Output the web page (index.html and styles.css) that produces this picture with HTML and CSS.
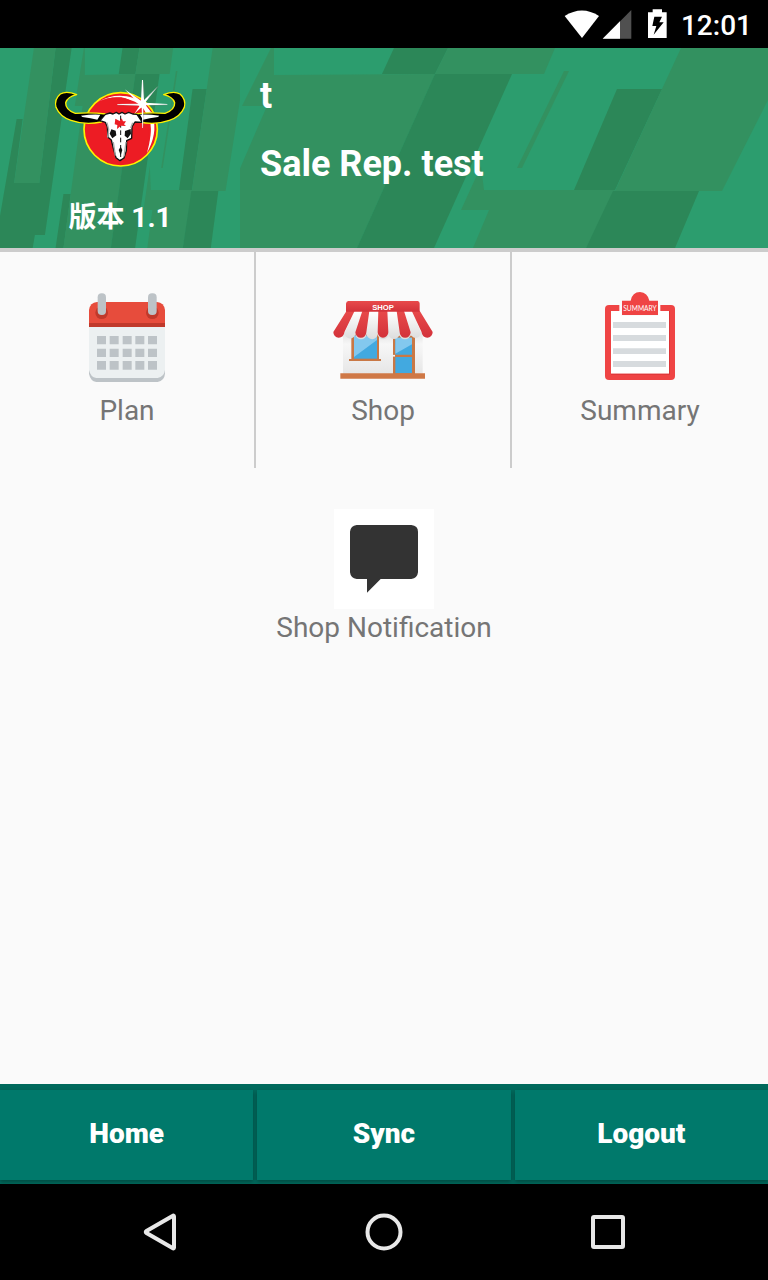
FILE: index.html
```html
<!DOCTYPE html>
<html lang="zh">
<head>
<meta charset="utf-8">
<meta name="viewport" content="width=device-width, initial-scale=1">
<title>Sale Rep.</title>
<link rel="stylesheet" href="styles.css">
</head>
<body>
<div class="screen">
  <div class="status">
    <svg class="status-icons" viewBox="0 0 324 96" aria-hidden="true">
      <path fill="#fff" d="M2 18Q54-15 105 18L54 84Z"/>
      <path fill="#505050" d="M202 0V86H116Z"/>
      <path fill="#fff" d="M168 34V86H116Z"/>
      <path fill="#fff" d="M266-2H294V7H308V84H252V7H266Z"/>
      <path fill="#000" d="M271 20H294L286 37H299L269 74L277 48H265Z"/>
    </svg>
    <time class="clock">12:01</time>
  </div>

  <header class="header">
    <div class="brand">
      <svg class="backdrop" viewBox="0 0 764 200" preserveAspectRatio="none" aria-hidden="true">
        <g id="pattern">
          <rect width="764" height="200" fill="#2c9d6e"/>
          <path fill="#2c8758" d="M177 0H228L143 187H111L104 200H0V168L53 71H72L45 135H125Z"/>
          <path fill="#339160" d="M108 0H177L125 135H45Z"/>
          <path fill="#2c8758" d="M202 146H225L202 200H177Z"/>
          <g transform="translate(236)">
            <path fill="#339160" d="M31 0H34V27L195 26L117 200H-34L-11 146L27 58H2Z"/>
            <path fill="#2c8758" d="M154 0H208L195 26H142Z"/>
            <path fill="#339160" d="M208 0H315L304 26H195Z"/>
            <path fill="#2c8758" d="M195 26H272L194 200H117Z"/>
            <path fill="#339160" d="M241 118L244 142H375L346 200H233L249 162H221Z"/>
            <path fill="#2c8758" d="M377 41H422L375 142H334Z"/>
            <path fill="#339160" d="M441 0H528V52L482 143H375L422 41Z"/>
            <path fill="#2c8758" d="M373 143H459L435 200H346Z"/>
            <path fill="#339160" d="M324 23H329L282 120H277Z"/>
          </g>
        </g>
      </svg>
      <svg class="logo" viewBox="0 0 450 330" role="img" aria-label="Bull skull logo">
        <circle cx="227" cy="178" r="110" fill="#ed1c24" stroke="#fff200" stroke-width="5"/>
        <path d="M163 94Q200 72 245 79Q300 88 324 142Q338 190 306 249Q322 190 315 158Q300 108 270 95Q215 70 163 94Z" fill="#fff"/>
        <path d="M158 98Q205 76 259 96Q300 120 316 158Q321 205 300 250Q322 185 300 140Q277 92 229 82Q185 80 158 98Z" fill="#ed1c24"/>
        <g id="horn">
          <path d="M95 74Q64 61 46 72Q27 88 33 112Q45 141 78 151Q119 166 169 156L182 132Q139 126 91 130Q61 119 62 98Q68 80 95 74Z" fill="#000" stroke="#fff200" stroke-width="4" stroke-linejoin="round"/>
          <path d="M108 137Q142 132 166 134L157 149Q139 144 112 141Z" fill="#fff"/>
        </g>
        <use href="#horn" transform="translate(451) scale(-1 1)"/>
        <path d="M165 152L181 133L195 129L204 132L214 127L222 132L231 127L240 132L251 127L263 132L276 133L292 157L270 156L261 170L260 205L245 212L244 242L237 264L225 272L213 263L205 235L199 210L189 202L187 170L181 157Z" fill="#fff" stroke="#111" stroke-width="4" stroke-linejoin="round"/>
        <path d="M199 178L212 182L214 196L202 205L194 191ZM240 183L257 177L258 191L248 205L239 197Z" fill="#111"/>
        <path d="M186 158L191 178L188 203M263 158L257 174M205 216L211 257M243 216L237 259" fill="none" stroke="#aaa" stroke-width="4"/>
        <path d="M227 137V270" stroke="#111" stroke-width="3" stroke-dasharray="14 8"/>
        <path d="M227 230L232 240L227 256L221 240Z" fill="#111"/>
        <path d="M211 146L224 153L230 145L234 154L243 154L237 163L243 168L228 167L216 177L217 165L209 163Z" fill="#ed1c24"/>
        <path d="M291 30H294L297 90L339 49L300 98L367 102V104L302 106L321 130L295 112L294 174H292L290 112L268 131L284 107L217 104V102L282 101L239 58L288 92Z" fill="#fff"/>
        <path d="M295 38L298 84M310 82L341 48M312 107L367 105M217 106L278 106M296 127V172" stroke="#777" stroke-width="1"/>
        <circle cx="293" cy="102" r="11" fill="#fff"/>
      </svg>
      <div class="version">版本 1.1</div>
    </div>
    <div class="profile">
      <svg class="backdrop" viewBox="236 0 528 200" preserveAspectRatio="none" aria-hidden="true"><use href="#pattern"/></svg>
      <p class="profile-line">t</p>
      <p class="profile-line">Sale Rep. test</p>
    </div>
  </header>

  <main class="menu">
    <button class="tile" type="button">
      <svg class="tile-icon" viewBox="21 36 300 300" aria-hidden="true">
        <path fill="#bdc3c7" d="M57 270H285V281Q283 302 263 306H79Q61 303 57 282Z"/>
        <path fill="#ecf0f1" d="M57 138H285V270Q283 290 263 294H79Q61 291 57 270Z"/>
        <path fill="#e74c3c" d="M81 66H261Q282 68 285 90V130H57V90Q60 68 81 66Z"/>
        <path fill="#c0392b" d="M57 129H285V141H57Z"/>
        <circle cx="95" cy="98" r="19" fill="#c0392b"/><circle cx="247" cy="98" r="19" fill="#c0392b"/>
        <rect x="83" y="40" width="25" height="65" rx="12" fill="#bdc3c7"/><rect x="234" y="40" width="26" height="65" rx="12" fill="#bdc3c7"/>
        <path fill="#bdc3c7" d="M81 168h27v25h-27zM119 168h27v25h-27zM158 168h27v25h-27zM196 168h27v25h-27zM234 168h27v25h-27zM81 206h27v25h-27zM119 206h27v25h-27zM158 206h27v25h-27zM196 206h27v25h-27zM234 206h27v25h-27zM81 243h27v26h-27zM119 243h27v26h-27zM158 243h27v26h-27zM196 243h27v26h-27zM234 243h27v26h-27z"/>
      </svg>
      <span class="tile-label">Plan</span>
    </button>
    <button class="tile" type="button">
      <svg class="tile-icon" viewBox="39 21 300 300" aria-hidden="true">
        <defs>
          <linearGradient id="red" x2="0" y2="1"><stop stop-color="#e84a4b"/><stop offset="1" stop-color="#d3323a"/></linearGradient>
          <linearGradient id="white" x2="0" y2="1"><stop stop-color="#fff"/><stop offset="1" stop-color="#dcdcdc"/></linearGradient>
          <linearGradient id="wall" x2="0" y2="1"><stop stop-color="#e0e0e0"/><stop offset=".3" stop-color="#f7f7f7"/><stop offset="1" stop-color="#e6e6e6"/></linearGradient>
        </defs>
        <path fill="url(#wall)" d="M69 140H308V266H69Z"/>
        <path fill="#c97845" d="M94 148H177V222H183V228H87V222H94Z"/>
        <path fill="#42a9e0" d="M102 152H171V221H102Z"/>
        <path fill="#83c8ee" d="M102 152H171V165L102 216Z"/>
        <path fill="#c97845" d="M219 152H285V267H219Z"/>
        <path fill="#42a9e0" d="M226 158H276V209H226ZM226 216H276V265H226Z"/>
        <path fill="#83c8ee" d="M226 158H276V178L226 206Z"/>
        <circle cx="222" cy="212" r="3" fill="#fff"/>
        <path fill="#cf7846" d="M61 265H315V281H61Z"/>
        <path fill="url(#white)" d="M103 79H277L302 140A15 15 0 0 1 272 146A15 15 0 0 1 238 146A16 16 0 0 1 206 146A16 16 0 0 1 173 146A16 16 0 0 1 140 146A16 16 0 0 1 106 146A15 15 0 0 1 74 143Z"/>
        <path fill="url(#red)" d="M80 77H104L73 142A16 16 0 0 1 40 141ZM127 78H148L139 142A16 16 0 0 1 106 142ZM175 78H202L205 142A16 16 0 0 1 173 142ZM230 78H252L272 142A16 16 0 0 1 239 142ZM275 77H299L338 141A16 16 0 0 1 305 142Z"/>
        <path fill="url(#red)" d="M85 48H293Q299 49 299 56V80H78V56Q79 49 85 48Z"/>
        <text x="189" y="74" class="sign sign-shop">SHOP</text>
      </svg>
      <span class="tile-label">Shop</span>
    </button>
    <button class="tile" type="button">
      <svg class="tile-icon" viewBox="0 36 300 300" aria-hidden="true">
        <rect x="45" y="75" width="210" height="225" rx="12" fill="#ef4444"/>
        <path fill="#fff" d="M63 93H237V281H63Z"/>
        <path fill="#dc3437" d="M237 93H240V284H63V281H237Z"/>
        <path fill="#d7dbde" d="M69 126H228V144H69ZM69 165H228V183H69ZM69 205H228V222H69ZM69 243H228V261H69Z"/>
        <path fill="#fafafa" d="M88 72H211V93H205V108H94V93H88Z"/>
        <path fill="#ef4444" d="M96 62H122Q127 36 150 36Q173 38 178 62H204V105H96Z"/>
        <text x="150" y="92" class="sign sign-summary">SUMMARY</text>
      </svg>
      <span class="tile-label">Summary</span>
    </button>
    <button class="tile tile-wide" type="button">
      <svg class="tile-icon" viewBox="222 27 300 300" aria-hidden="true">
        <path fill="#fff" d="M222 27H522V327H222Z"/>
        <path fill="#333" d="M290 75H454Q474 77 474 95V217Q472 235 454 237H362L321 278V237H290Q272 235 270 217V95Q272 77 290 75Z"/>
      </svg>
      <span class="tile-label">Shop Notification</span>
    </button>
  </main>

  <div class="actions">
    <button class="action" type="button">Home</button>
    <button class="action" type="button">Sync</button>
    <button class="action" type="button">Logout</button>
  </div>

  <nav class="system-nav">
    <button class="key" type="button" aria-label="Back"><svg class="key-icon" viewBox="0 0 48 48"><path d="M38 8.500V39.500Q38 41 36.500 40L10.500 25Q9 24 10.500 23L36.500 8Q38 7 38 8.500Z"/></svg></button>
    <button class="key" type="button" aria-label="Home screen"><svg class="key-icon" viewBox="0 0 48 48"><circle cx="24" cy="24" r="16.500"/></svg></button>
    <button class="key" type="button" aria-label="Recent apps"><svg class="key-icon" viewBox="0 0 48 48"><rect x="9" y="9" width="30" height="30" rx="1"/></svg></button>
  </nav>
</div>
</body>
</html>
```

FILE: styles.css
```css
* { box-sizing: border-box; }
body {
  margin: 0;
  background: #fafafa;
  font-family: Roboto, "Noto Sans CJK SC", sans-serif;
}
button {
  margin: 0;
  padding: 0;
  border: 0;
  background: none;
  font: inherit;
  color: inherit;
}
svg { display: block; }
.screen {
  min-height: 100vh;
  display: flex;
  flex-direction: column;
}
.status {
  display: flex;
  justify-content: flex-end;
  align-items: center;
  gap: 9px;
  height: 48px;
  padding: 4px 16px 0 0;
  background: #000;
  color: #fff;
}
.status-icons {
  width: 108px;
  height: 32px;
  overflow: visible;
}
.clock {
  font-size: 28px;
  font-weight: 500;
  line-height: 44px;
}
.header {
  display: grid;
  grid-template-columns: 240px 1fr;
  border-bottom: 4px solid #ccc;
  color: #fff;
  font-weight: 700;
}
.brand, .profile {
  position: relative;
  isolation: isolate;
}
.backdrop {
  position: absolute;
  inset: 0;
  width: 100%;
  height: 100%;
  z-index: -1;
}
.brand {
  display: flex;
  flex-direction: column;
  align-items: center;
  gap: 20px;
  padding: 22px 0 12px;
}
.logo {
  width: 150px;
  height: 110px;
}
.version {
  font-size: 28px;
  font-weight: 700;
  line-height: 36px;
}
.profile {
  display: flex;
  flex-direction: column;
  gap: 20px;
  padding: 24px 20px;
}
.profile-line {
  margin: 0;
  font-size: 36px;
  line-height: 48px;
}
.menu {
  flex: 1;
  display: grid;
  grid-template-columns: repeat(3, 1fr);
  align-content: start;
  row-gap: 1px;
}
.tile {
  display: flex;
  flex-direction: column;
  align-items: center;
  padding: 40px 0 38px;
  border-right: 2px solid #ccc;
  color: #757575;
}
.tile:nth-child(n + 3) { border-right: 0; }
.tile-wide { grid-column: 1 / -1; }
.tile-icon {
  width: 100px;
  height: 100px;
}
.tile-label {
  font-size: 28px;
  line-height: 38px;
}
.sign {
  fill: #fff;
  text-anchor: middle;
}
.sign-shop {
  font-family: "Liberation Sans", sans-serif;
  font-size: 23px;
  font-weight: 700;
}
.sign-summary {
  font-family: Lato, sans-serif;
  font-size: 20px;
  font-weight: 400;
}
.actions {
  display: grid;
  grid-template-columns: repeat(3, 1fr);
  gap: 4px;
  padding: 6px 0 4px;
  background: #00695c;
}
.action {
  height: 90px;
  padding-bottom: 4px;
  background: #00796b;
  box-shadow: 0 2px 4px rgba(0, 0, 0, .3);
  color: #fff;
  font-size: 28px;
  font-weight: 900;
}
.system-nav {
  display: grid;
  grid-template-columns: repeat(3, 1fr);
  height: 96px;
  padding: 0 48px;
  background: #000;
  position: relative;
}
.key {
  display: grid;
  place-items: center;
}
.key-icon {
  width: 48px;
  height: 48px;
  fill: none;
  stroke: #e8e8e8;
  stroke-width: 4px;
}
```
